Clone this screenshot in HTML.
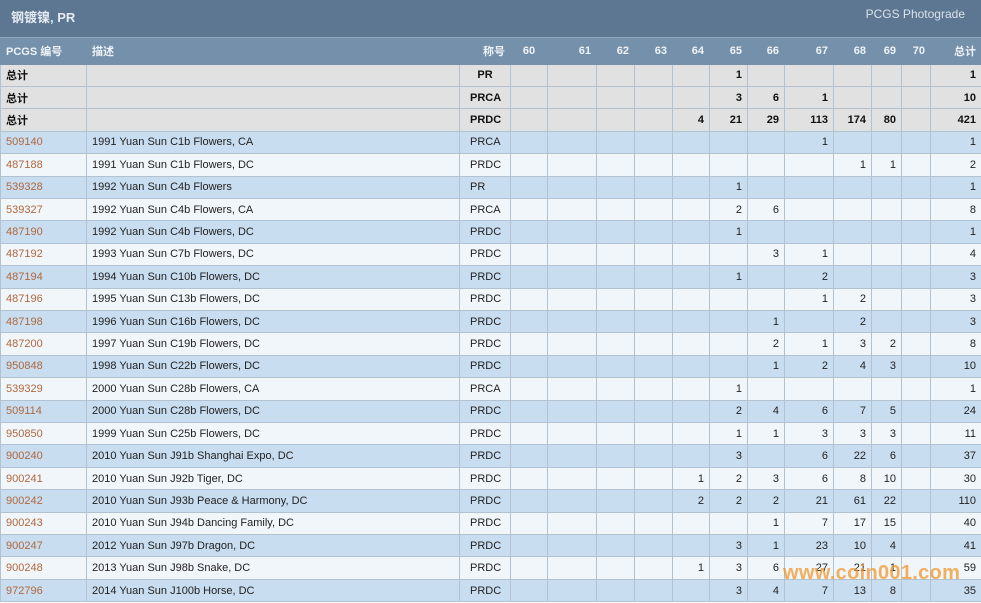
<!DOCTYPE html>
<html><head><meta charset="utf-8"><style>
body{margin:0;width:981px;height:603px;overflow:hidden;background:#fff;font-family:"Liberation Sans","Noto Sans CJK SC",sans-serif;font-size:11px;color:#222;position:relative}
.top{position:absolute;left:0;top:0;width:981px;height:38px;background:#5d7691;border-bottom:1px solid #8fa6bb;box-sizing:border-box}
.top .t{position:absolute;left:11px;top:7px;font-size:13px;font-weight:bold;color:#e4ebf2}
.top .r{position:absolute;right:16px;top:7px;font-size:12px;color:#d8e2ec}
table{position:absolute;left:0;top:38px;border-collapse:collapse;table-layout:fixed;width:981px}
td{border:1px solid #b3c2d1;padding:0 5px;white-space:nowrap;overflow:hidden;text-align:right}
tr{height:22.42px}
tr.h{height:26px}
tr.h td{background:#7590aa;color:#eef3f8;font-weight:bold;border-color:#7590aa;border-top:none}
tr.s td{background:#e1e1e1;font-weight:bold;color:#111}
tr.a td{background:#c8ddf0}
tr.b td{background:#f1f6fb}
td.l{text-align:left}
td.c{text-align:left;padding-left:10px}
tr.d td.l:first-child{color:#b0683c}
.wm{position:absolute;left:783px;top:562px;font-size:20px;font-weight:bold;color:rgba(240,150,40,0.75);letter-spacing:0.3px}
</style></head><body>
<div class="top"><span class="t">钢镀镍, PR</span><span class="r">PCGS Photograde</span></div>
<table>
<colgroup><col style="width:86px"><col style="width:373px"><col style="width:51px"><col style="width:37px"><col style="width:49px"><col style="width:38px"><col style="width:38px"><col style="width:37px"><col style="width:38px"><col style="width:37px"><col style="width:49px"><col style="width:38px"><col style="width:30px"><col style="width:29px"><col style="width:51px"></colgroup>
<tr class="h"><td class="l">PCGS 编号</td><td class="l">描述</td><td style="text-align:right">称号</td><td style="text-align:center">60</td><td>61</td><td>62</td><td>63</td><td>64</td><td>65</td><td>66</td><td>67</td><td>68</td><td>69</td><td>70</td><td>总计</td></tr>
<tr class="s"><td class="l">总计</td><td></td><td style="text-align:center">PR</td><td></td><td></td><td></td><td></td><td></td><td>1</td><td></td><td></td><td></td><td></td><td></td><td>1</td></tr>
<tr class="s"><td class="l">总计</td><td></td><td class="c">PRCA</td><td></td><td></td><td></td><td></td><td></td><td>3</td><td>6</td><td>1</td><td></td><td></td><td></td><td>10</td></tr>
<tr class="s"><td class="l">总计</td><td></td><td class="c">PRDC</td><td></td><td></td><td></td><td></td><td>4</td><td>21</td><td>29</td><td>113</td><td>174</td><td>80</td><td></td><td>421</td></tr>
<tr class="d a"><td class="l">509140</td><td class="l">1991 Yuan Sun C1b Flowers, CA</td><td class="c">PRCA</td><td></td><td></td><td></td><td></td><td></td><td></td><td></td><td>1</td><td></td><td></td><td></td><td>1</td></tr>
<tr class="d b"><td class="l">487188</td><td class="l">1991 Yuan Sun C1b Flowers, DC</td><td class="c">PRDC</td><td></td><td></td><td></td><td></td><td></td><td></td><td></td><td></td><td>1</td><td>1</td><td></td><td>2</td></tr>
<tr class="d a"><td class="l">539328</td><td class="l">1992 Yuan Sun C4b Flowers</td><td class="c">PR</td><td></td><td></td><td></td><td></td><td></td><td>1</td><td></td><td></td><td></td><td></td><td></td><td>1</td></tr>
<tr class="d b"><td class="l">539327</td><td class="l">1992 Yuan Sun C4b Flowers, CA</td><td class="c">PRCA</td><td></td><td></td><td></td><td></td><td></td><td>2</td><td>6</td><td></td><td></td><td></td><td></td><td>8</td></tr>
<tr class="d a"><td class="l">487190</td><td class="l">1992 Yuan Sun C4b Flowers, DC</td><td class="c">PRDC</td><td></td><td></td><td></td><td></td><td></td><td>1</td><td></td><td></td><td></td><td></td><td></td><td>1</td></tr>
<tr class="d b"><td class="l">487192</td><td class="l">1993 Yuan Sun C7b Flowers, DC</td><td class="c">PRDC</td><td></td><td></td><td></td><td></td><td></td><td></td><td>3</td><td>1</td><td></td><td></td><td></td><td>4</td></tr>
<tr class="d a"><td class="l">487194</td><td class="l">1994 Yuan Sun C10b Flowers, DC</td><td class="c">PRDC</td><td></td><td></td><td></td><td></td><td></td><td>1</td><td></td><td>2</td><td></td><td></td><td></td><td>3</td></tr>
<tr class="d b"><td class="l">487196</td><td class="l">1995 Yuan Sun C13b Flowers, DC</td><td class="c">PRDC</td><td></td><td></td><td></td><td></td><td></td><td></td><td></td><td>1</td><td>2</td><td></td><td></td><td>3</td></tr>
<tr class="d a"><td class="l">487198</td><td class="l">1996 Yuan Sun C16b Flowers, DC</td><td class="c">PRDC</td><td></td><td></td><td></td><td></td><td></td><td></td><td>1</td><td></td><td>2</td><td></td><td></td><td>3</td></tr>
<tr class="d b"><td class="l">487200</td><td class="l">1997 Yuan Sun C19b Flowers, DC</td><td class="c">PRDC</td><td></td><td></td><td></td><td></td><td></td><td></td><td>2</td><td>1</td><td>3</td><td>2</td><td></td><td>8</td></tr>
<tr class="d a"><td class="l">950848</td><td class="l">1998 Yuan Sun C22b Flowers, DC</td><td class="c">PRDC</td><td></td><td></td><td></td><td></td><td></td><td></td><td>1</td><td>2</td><td>4</td><td>3</td><td></td><td>10</td></tr>
<tr class="d b"><td class="l">539329</td><td class="l">2000 Yuan Sun C28b Flowers, CA</td><td class="c">PRCA</td><td></td><td></td><td></td><td></td><td></td><td>1</td><td></td><td></td><td></td><td></td><td></td><td>1</td></tr>
<tr class="d a"><td class="l">509114</td><td class="l">2000 Yuan Sun C28b Flowers, DC</td><td class="c">PRDC</td><td></td><td></td><td></td><td></td><td></td><td>2</td><td>4</td><td>6</td><td>7</td><td>5</td><td></td><td>24</td></tr>
<tr class="d b"><td class="l">950850</td><td class="l">1999 Yuan Sun C25b Flowers, DC</td><td class="c">PRDC</td><td></td><td></td><td></td><td></td><td></td><td>1</td><td>1</td><td>3</td><td>3</td><td>3</td><td></td><td>11</td></tr>
<tr class="d a"><td class="l">900240</td><td class="l">2010 Yuan Sun J91b Shanghai Expo, DC</td><td class="c">PRDC</td><td></td><td></td><td></td><td></td><td></td><td>3</td><td></td><td>6</td><td>22</td><td>6</td><td></td><td>37</td></tr>
<tr class="d b"><td class="l">900241</td><td class="l">2010 Yuan Sun J92b Tiger, DC</td><td class="c">PRDC</td><td></td><td></td><td></td><td></td><td>1</td><td>2</td><td>3</td><td>6</td><td>8</td><td>10</td><td></td><td>30</td></tr>
<tr class="d a"><td class="l">900242</td><td class="l">2010 Yuan Sun J93b Peace &amp; Harmony, DC</td><td class="c">PRDC</td><td></td><td></td><td></td><td></td><td>2</td><td>2</td><td>2</td><td>21</td><td>61</td><td>22</td><td></td><td>110</td></tr>
<tr class="d b"><td class="l">900243</td><td class="l">2010 Yuan Sun J94b Dancing Family, DC</td><td class="c">PRDC</td><td></td><td></td><td></td><td></td><td></td><td></td><td>1</td><td>7</td><td>17</td><td>15</td><td></td><td>40</td></tr>
<tr class="d a"><td class="l">900247</td><td class="l">2012 Yuan Sun J97b Dragon, DC</td><td class="c">PRDC</td><td></td><td></td><td></td><td></td><td></td><td>3</td><td>1</td><td>23</td><td>10</td><td>4</td><td></td><td>41</td></tr>
<tr class="d b"><td class="l">900248</td><td class="l">2013 Yuan Sun J98b Snake, DC</td><td class="c">PRDC</td><td></td><td></td><td></td><td></td><td>1</td><td>3</td><td>6</td><td>27</td><td>21</td><td>1</td><td></td><td>59</td></tr>
<tr class="d a"><td class="l">972796</td><td class="l">2014 Yuan Sun J100b Horse, DC</td><td class="c">PRDC</td><td></td><td></td><td></td><td></td><td></td><td>3</td><td>4</td><td>7</td><td>13</td><td>8</td><td></td><td>35</td></tr>
</table>
<div class="wm">www.coin001.com</div>
</body></html>
